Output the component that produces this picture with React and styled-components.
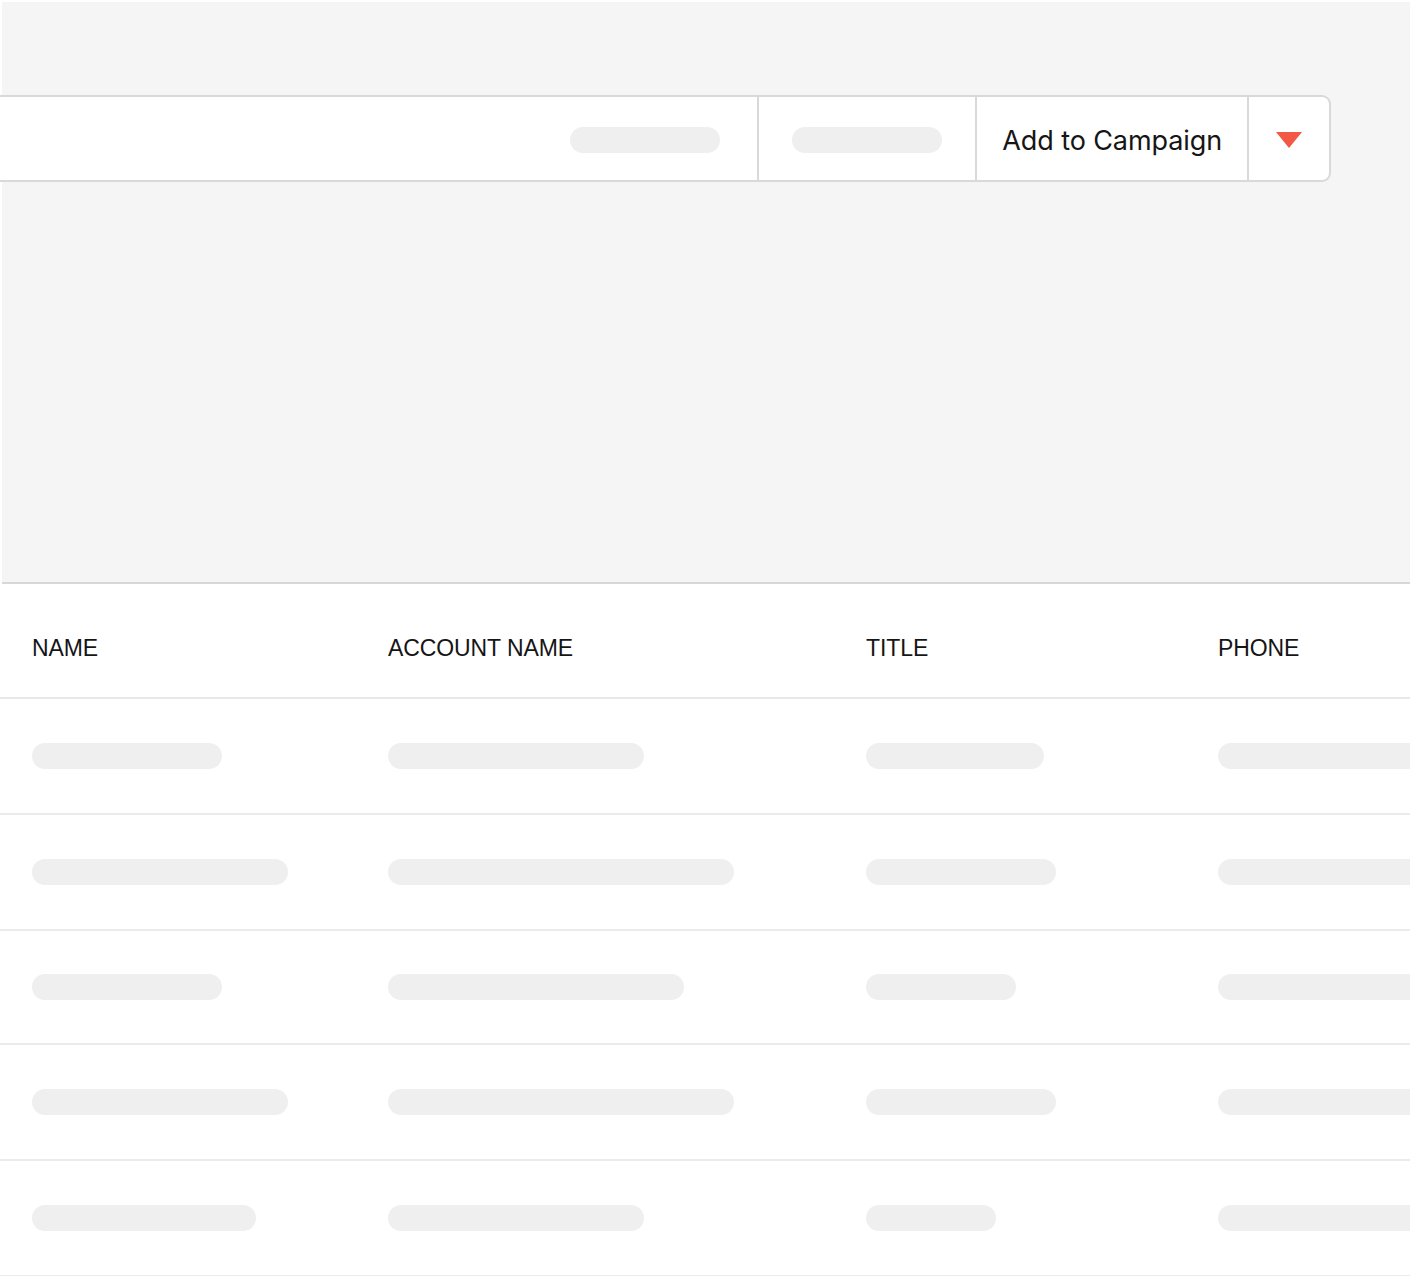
import React from "react";
import styled, { createGlobalStyle } from "styled-components";

const GlobalStyle = createGlobalStyle`
  html, body {
    margin: 0;
    padding: 0;
    background: #ffffff;
    overflow: hidden;
  }
  body {
    font-family: "Liberation Sans", Arial, sans-serif;
    color: #111111;
  }
`;

const rows = [
  [190, 256, 178, 260],
  [256, 346, 190, 260],
  [190, 296, 150, 260],
  [256, 346, 190, 260],
  [224, 256, 130, 260],
];

const columns = ["NAME", "ACCOUNT NAME", "TITLE", "PHONE"];

const App = () => {
  return (
    <Page>
      <GlobalStyle />
      {/* top panel with toolbar */}
      <TopPanel>
        <Toolbar>
          <Segment grow align="flex-end" padRight={37}>
            <Pill width={150} />
          </Segment>
          <Segment width={216}>
            <Pill width={150} />
          </Segment>
          <Segment padX={25}>
            <ButtonLabel>Add to Campaign</ButtonLabel>
          </Segment>
          <Segment width={80} last>
            <Caret viewBox="0 0 26 16">
              <path d="M0 0 H26 L13 16 Z" fill="#f25843" />
            </Caret>
          </Segment>
        </Toolbar>
      </TopPanel>

      {/* table */}
      <Table>
        <HeaderRow>
          {columns.map((c) => (
            <HeaderCell key={c}>{c}</HeaderCell>
          ))}
        </HeaderRow>
        {rows.map((r, i) => (
          <Row key={i} short={i === 2}>
            {r.map((w, j) => (
              <Cell key={j}>
                <Pill width={w} />
              </Cell>
            ))}
          </Row>
        ))}
      </Table>
    </Page>
  );
};

const Page = styled.div`
  width: 1410px;
  height: 1276px;
  overflow: hidden;
  background: #ffffff;
`;

const TopPanel = styled.div`
  margin: 2px 0 0 2px;
  height: 582px;
  box-sizing: border-box;
  background: #f5f5f5;
  border-bottom: 2px solid #d7d7d7;
  padding: 93px 79px 0 0;
`;

const Toolbar = styled.div`
  display: flex;
  height: 87px;
  margin-left: -4px;
  box-sizing: border-box;
  background: #ffffff;
  border: 2px solid #d9d9d9;
  border-left: none;
  border-radius: 0 9px 9px 0;
`;

const Segment = styled.div`
  display: flex;
  align-items: center;
  justify-content: ${(p) => p.align || "center"};
  flex: ${(p) => (p.grow ? "1" : "none")};
  width: ${(p) => (p.width ? `${p.width}px` : "auto")};
  padding: 3px ${(p) => p.padRight || p.padX || 0}px 0 ${(p) => p.padX || 0}px;
  border-right: ${(p) => (p.last ? "none" : "2px solid #d9d9d9")};
`;

const ButtonLabel = styled.span`
  font-family: Inter, "Noto Sans", sans-serif;
  font-size: 27px;
  letter-spacing: -0.1px;
  color: #161616;
  white-space: nowrap;
`;

const Caret = styled.svg`
  width: 26px;
  height: 16px;
  display: block;
`;

const Pill = styled.div`
  width: ${(p) => p.width}px;
  height: 26px;
  border-radius: 13px;
  background: #efefef;
  flex: none;
`;

const Table = styled.div`
  display: flex;
  flex-direction: column;
`;

const gridCols = "356px 478px 352px 1fr";

const HeaderRow = styled.div`
  display: grid;
  grid-template-columns: ${gridCols};
  align-items: center;
  height: 115px;
  box-sizing: border-box;
  padding: 16px 0 0 32px;
  border-bottom: 2px solid #e8e8e8;
`;

const HeaderCell = styled.div`
  font-size: 23px;
  letter-spacing: -0.1px;
  color: #151515;
  white-space: nowrap;
`;

const Row = styled.div`
  display: grid;
  grid-template-columns: ${gridCols};
  align-items: center;
  height: ${(p) => (p.short ? 112 : 114)}px;
  padding-left: 32px;
  border-bottom: 2px solid #ebebeb;
`;

const Cell = styled.div`
  display: flex;
  overflow: visible;
`;

export default App;
